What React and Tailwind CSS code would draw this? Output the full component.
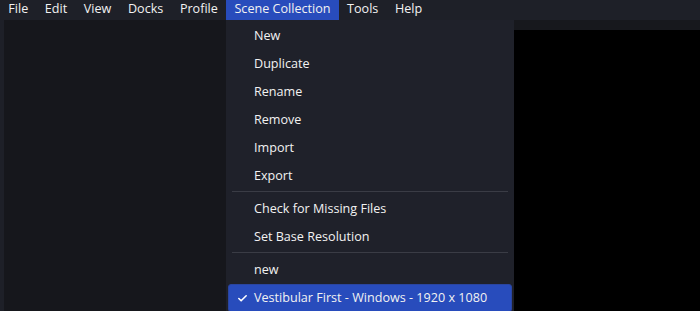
import { Check } from "lucide-react";

const menus = ["File", "Edit", "View", "Docks", "Profile", "Scene Collection", "Tools", "Help"];

function Item({ label, checked }) {
  return (
    <div className="h-[28px] px-[2px] flex">
      <div
        className={
          "flex-1 flex items-center rounded-[3px] " +
          (checked ? "bg-[#284cbc] border border-[#2a45a0]" : "")
        }
      >
        <div className={(checked ? "w-[25px] pl-px" : "w-[26px] pl-[2px]") + " flex justify-center"}>
          {checked && <Check size={11} strokeWidth={3.5} className="text-white" />}
        </div>
        <span>{label}</span>
      </div>
    </div>
  );
}

function Separator() {
  return (
    <div className="h-[5px] pt-px px-[6px]">
      <div className="h-px bg-[#3a3c45]" />
    </div>
  );
}

export default function App() {
  return (
    <div
      className="w-[700px] h-[311px] bg-[#1e2028] text-[#f2f2f2] text-[12.6px] overflow-hidden flex flex-col"
      style={{ fontFamily: '"Open Sans", sans-serif' }}
    >
      <div className="h-[20px] flex items-stretch shrink-0">
        {menus.map((m) => (
          <div
            key={m}
            className={
              "px-[8.3px] flex items-center leading-none pb-px " +
              (m === "Scene Collection" ? "bg-[#284cbc]" : "")
            }
          >
            {m}
          </div>
        ))}
      </div>
      <div className="flex-1 flex relative">
        <div className="ml-[4px] w-[222px] bg-[#16171c]" />
        <div className="w-[288px] bg-[#1f212a] pt-[2px]">
          <Item label="New" />
          <Item label="Duplicate" />
          <Item label="Rename" />
          <Item label="Remove" />
          <Item label="Import" />
          <Item label="Export" />
          <Separator />
          <Item label="Check for Missing Files" />
          <Item label="Set Base Resolution" />
          <Separator />
          <Item label="new" />
          <Item label="Vestibular First - Windows - 1920 x 1080" checked />
        </div>
        <div className="flex-1 flex flex-col">
          <div className="h-[10px] bg-[#17181d]" />
          <div className="flex-1 bg-black" />
        </div>
      </div>
    </div>
  );
}
